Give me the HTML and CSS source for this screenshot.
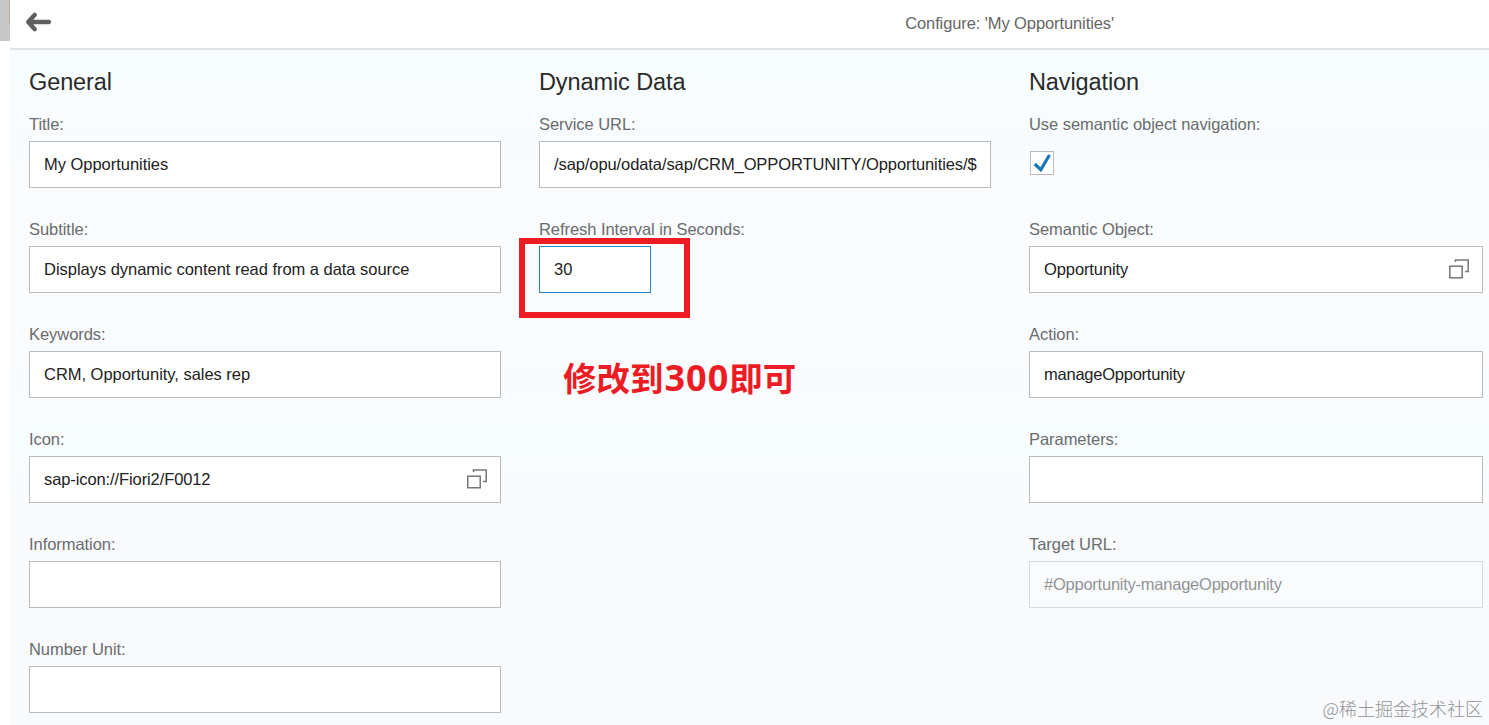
FILE: index.html
```
<!DOCTYPE html>
<html lang="en">
<head>
    <meta charset="UTF-8">
    <title>Configure: 'My Opportunities'</title>
    <link rel="stylesheet" href="styles.css">
</head>
<body>

<div class="side-strip"></div>

<div class="page">
    <!-- Header -->
    <header class="page-header">
        <button type="button" class="back-btn" aria-label="Back">
            <svg width="28" height="22" viewBox="0 0 28 22">
                <path d="M10.8 3.8L4.200 11l6.600 7.200M5 11h20" fill="none" stroke="#5f5f61" stroke-width="4.300" stroke-linecap="round" stroke-linejoin="round"/>
            </svg>
        </button>
        <h1 class="page-title">Configure: 'My Opportunities'</h1>
    </header>

    <form class="config-form">
        <section class="column">
            <h2>General</h2>
            <div class="form-group">
                <label for="title">Title:</label>
                <input type="text" id="title" value="My Opportunities">
            </div>
            <div class="form-group">
                <label for="subtitle">Subtitle:</label>
                <input type="text" id="subtitle" value="Displays dynamic content read from a data source">
            </div>
            <div class="form-group">
                <label for="keywords">Keywords:</label>
                <input type="text" id="keywords" value="CRM, Opportunity, sales rep">
            </div>
            <div class="form-group">
                <label for="icon">Icon:</label>
                <div class="input-help">
                    <input type="text" id="icon" class="tight" value="sap-icon://Fiori2/F0012">
                    <svg class="help-icon" width="20" height="20" viewBox="0 0 20 20">
                        <path d="M.75 7.25h12.5v11.5H.75zM6.5 3V1h12.7v11.5H16" fill="none" stroke="#77777a" stroke-width="1.5"/>
                    </svg>
                </div>
            </div>
            <div class="form-group">
                <label for="info">Information:</label>
                <input type="text" id="info">
            </div>
            <div class="form-group">
                <label for="unit">Number Unit:</label>
                <input type="text" id="unit">
            </div>
        </section>

        <section class="column">
            <h2>Dynamic Data</h2>
            <div class="form-group">
                <label for="service">Service URL:</label>
                <input type="text" id="service" class="service-url" value="/sap/opu/odata/sap/CRM_OPPORTUNITY/Opportunities/$">
            </div>
            <div class="form-group">
                <label for="interval">Refresh Interval in Seconds:</label>
                <input type="text" id="interval" class="interval" value="30">
                <div class="highlight"></div>
            </div>
            <p class="note">修改到<span class="note-num">300</span>即可</p>
        </section>

        <section class="column">
            <h2>Navigation</h2>
            <div class="form-group">
                <label for="semantic">Use semantic object navigation:</label>
                <div class="checkbox-row">
                    <span class="checkbox" id="semantic" role="checkbox" aria-checked="true">
                        <svg width="22" height="22" viewBox="0 0 22 22">
                            <path d="M3.8 12l6 5.8L18.500 3" fill="none" stroke="#1576b8" stroke-width="3.200"/>
                        </svg>
                    </span>
                </div>
            </div>
            <div class="form-group">
                <label for="object">Semantic Object:</label>
                <div class="input-help">
                    <input type="text" id="object" class="tight" value="Opportunity">
                    <svg class="help-icon" width="20" height="20" viewBox="0 0 20 20">
                        <path d="M.75 7.25h12.5v11.5H.75zM6.5 3V1h12.7v11.5H16" fill="none" stroke="#77777a" stroke-width="1.5"/>
                    </svg>
                </div>
            </div>
            <div class="form-group">
                <label for="action">Action:</label>
                <input type="text" id="action" class="tighter" value="manageOpportunity">
            </div>
            <div class="form-group">
                <label for="params">Parameters:</label>
                <input type="text" id="params">
            </div>
            <div class="form-group">
                <label for="target">Target URL:</label>
                <input type="text" id="target" class="tighter" value="#Opportunity-manageOpportunity" disabled>
            </div>
        </section>
    </form>
</div>

<div class="watermark">@稀土掘金技术社区</div>

</body>
</html>
```
FILE: styles.css
```
* {
    box-sizing: border-box;
}

body {
    margin: 0;
    height: 725px;
    display: flex;
    overflow: hidden;
    background: #fff;
    font-family: "Liberation Sans", Arial, "Noto Sans CJK SC", sans-serif;
    font-size: 16.5px;
}

/* Edge of the screen behind */
.side-strip {
    flex: none;
    width: 10px;
    height: 41px;
    background: linear-gradient(#c9a98c 60%, #c9c8c8 60%) right top / 1px 100% no-repeat #c9c8c8;
}

.page {
    flex: 1;
    min-width: 0;
    display: flex;
    flex-direction: column;
}

/* Header */
.page-header {
    flex: none;
    display: flex;
    align-items: center;
    height: 50px;
    padding: 0 375px 4px 14px;
    border-bottom: 2px solid #e1e3e5;
    background: #fff;
}

.back-btn {
    display: flex;
    padding: 0;
    border: none;
    background: none;
    cursor: pointer;
}

.page-title {
    margin: 2px 0 0 auto;
    color: #666;
    font-size: 16.5px;
    font-weight: normal;
    letter-spacing: -0.1px;
}

/* Form */
.config-form {
    flex: 1;
    display: grid;
    grid-template-columns: 472px 452px 454px;
    column-gap: 38px;
    padding-left: 19px;
    background: linear-gradient(#f7fdfe, #f9fbfd 18%, #f9fbfd 45%, #f7fdfe 57%, #f9fafc 68%, #f9fafc);
}

h2 {
    height: 57px;
    margin: 0;
    color: #2b2b2b;
    font-size: 23.5px;
    font-weight: normal;
    letter-spacing: -0.1px;
    line-height: 64px;
}

.form-group {
    position: relative;
    margin-bottom: 24px;
}

label {
    display: block;
    height: 34px;
    color: #6a6c6e;
    letter-spacing: -0.05px;
    line-height: 35px;
}

input {
    display: block;
    width: 100%;
    height: 47px;
    padding: 0 14px;
    border: 1px solid #b9bbbd;
    border-radius: 0;
    outline: none;
    background: #fff;
    color: #222;
    font: inherit;
    letter-spacing: -0.03px;
}

input:disabled {
    border-color: #d9dbdd;
    background: #f9fbfd;
    color: #929496;
}

.tight {
    letter-spacing: -0.1px;
}

.tighter {
    letter-spacing: -0.24px;
}

.service-url {
    padding-right: 10px;
    letter-spacing: -0.09px;
}

.interval {
    width: 112px;
    border-color: #2485c2;
}

/* Value help */
.input-help {
    position: relative;
}

.help-icon {
    position: absolute;
    top: 13px;
    right: 14px;
}

/* Checkbox */
.checkbox-row {
    height: 47px;
    padding: 10px 1px;
}

.checkbox {
    display: flex;
    width: 24px;
    height: 24px;
    border: 1px solid #b9bbbd;
    background: #fff;
}

/* Red marks */
.highlight {
    position: absolute;
    top: 26px;
    left: -20px;
    width: 171px;
    height: 80px;
    border: 6px solid #ed1c24;
}

.note {
    margin: 60px 0 0 24px;
    color: #ed1c24;
    font-family: "Noto Sans CJK SC", sans-serif;
    font-size: 33.5px;
    font-weight: bold;
    line-height: 48px;
}

.note-num {
    padding-left: 1px;
    font-family: "Open Sans", sans-serif;
    font-size: 36px;
    letter-spacing: 1px;
    line-height: 1;
}

.watermark {
    position: absolute;
    right: 6px;
    bottom: 4px;
    color: #919396;
    font-family: "Noto Sans CJK SC", sans-serif;
    font-size: 18px;
    font-weight: 300;
    line-height: 26px;
}
```
